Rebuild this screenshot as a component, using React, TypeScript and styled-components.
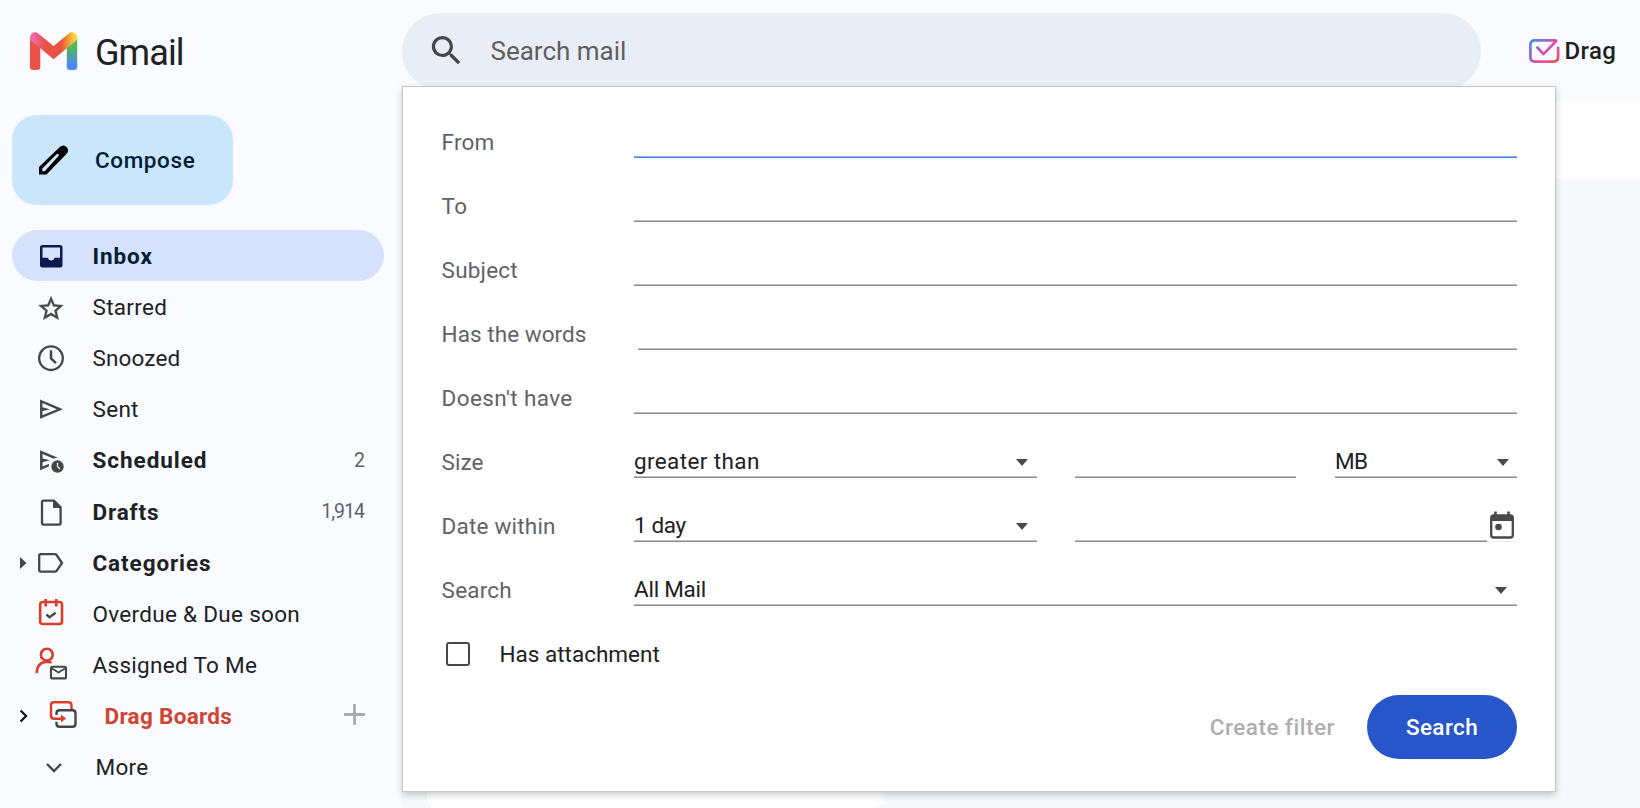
import React from "react";
import styled, { createGlobalStyle } from "styled-components";

const GlobalStyle = createGlobalStyle`
  * { box-sizing: border-box; }
  body {
    margin: 0;
    overflow: hidden;
    background: #f9fbff;
    font-family: Roboto, "Liberation Sans", sans-serif;
    font-size: 22.5px;
    color: #202124;
  }
`;

const Page = styled.div`
  position: relative;
  display: grid;
  grid-template-columns: 402px 1fr;
  width: 1640px;
  height: 808px;
  overflow: hidden;
`;

const Sidebar = styled.aside`
  display: flex;
  flex-direction: column;
  align-items: flex-start;
`;

const Brand = styled.div`
  display: flex;
  align-items: center;
  height: 102px;
  padding-left: 29px;
  gap: 16px;
`;

const BrandName = styled.span`
  padding-top: 3px;
  font-size: 36px;
  line-height: 40px;
  letter-spacing: -0.9px;
`;

const ComposeButton = styled.button`
  display: flex;
  align-items: center;
  width: 221px;
  height: 90px;
  margin: 13px 0 25px 12px;
  padding: 0 0 1px 25px;
  gap: 24px;
  border: 0;
  border-radius: 25px;
  background: #c9e6fd;
  color: #001d35;
  font: 500 22.5px Roboto, sans-serif;
  letter-spacing: 0.6px;
`;

const Nav = styled.nav`
  display: flex;
  flex-direction: column;
`;

const NavRow = styled.a<{ $active?: boolean }>`
  display: flex;
  align-items: center;
  width: 372px;
  height: 51.2px;
  margin-left: 12px;
  padding-right: 19px;
  border-radius: 26px;
  background: ${(p) => (p.$active ? "#d6e2fb" : "transparent")};
  color: ${(p) => (p.$active ? "#001d35" : "#202124")};
`;

const Expander = styled.span`
  display: flex;
  align-items: center;
  width: 19px;
  padding-left: 8px;
`;

const IconSlot = styled.span<{ $shift?: number }>`
  display: flex;
  width: 40px;
  height: 40px;
  margin-left: ${(p) => p.$shift ?? 0}px;
`;

const NavLabel = styled.span<{ $weight?: number; $spacing?: number; $color?: string }>`
  flex: 1;
  margin-left: 21.5px;
  font-weight: ${(p) => p.$weight ?? 400};
  letter-spacing: ${(p) => p.$spacing ?? 0.3}px;
  color: ${(p) => p.$color ?? "inherit"};
  white-space: nowrap;
`;

const Count = styled.span<{ $tight?: boolean }>`
  font-size: 19.5px;
  color: #5f6368;
  letter-spacing: ${(p) => (p.$tight ? "-1px" : "0")};
  margin-right: ${(p) => (p.$tight ? "1px" : "0")};
`;

const Main = styled.main`
  display: flex;
  flex-direction: column;
`;

const TopBar = styled.header`
  display: flex;
  align-items: flex-start;
  height: 102px;
  padding-top: 13px;
`;

const SearchBar = styled.div`
  display: flex;
  align-items: center;
  width: 1079px;
  height: 77px;
  padding: 0 0 2px 25px;
  gap: 24.5px;
  border-radius: 39px;
  background: #e9eef6;
  color: #5f5f5f;
  font-size: 26px;
`;

const DragBrand = styled.div`
  display: flex;
  align-items: center;
  height: 75px;
  margin-left: 47px;
  gap: 4.5px;
  font-size: 24px;
  font-weight: 500;
  letter-spacing: 0.4px;
  color: #1f1f1f;
`;

const Toolbar = styled.div`
  height: 77px;
  background: #fff;
`;

const Content = styled.section`
  display: flex;
  flex: 1;
  align-items: flex-end;
  padding-left: 25px;
  background: #f6f8fc;
`;

const Card = styled.div`
  width: 457px;
  height: 60px;
  margin-bottom: -1px;
  border-radius: 12px;
  background: #fff;
`;

const Panel = styled.form`
  position: absolute;
  top: 86px;
  left: 402px;
  display: flex;
  flex-direction: column;
  width: 1154px;
  height: 706px;
  padding: 23px 38px 0;
  border: 1px solid #c6c6c6;
  background: #fff;
  box-shadow: 0 3px 7px rgba(0, 0, 0, 0.2);
`;

const FieldRow = styled.div`
  display: grid;
  grid-template-columns: 193px 1fr;
  align-items: center;
  height: 64px;
`;

const FieldLabel = styled.label<{ $spacing?: number }>`
  padding-left: 0.6px;
  color: #5f6368;
  letter-spacing: ${(p) => p.$spacing ?? 0.2}px;
`;

const Controls = styled.div`
  display: flex;
  align-items: center;
`;

const Line = styled.div<{ $focus?: boolean; $width?: number; $ml?: number }>`
  flex: ${(p) => (p.$width ? "none" : "1")};
  width: ${(p) => (p.$width ? `${p.$width}px` : "auto")};
  height: 32px;
  margin-left: ${(p) => p.$ml ?? 0}px;
  border-bottom: 1px solid ${(p) => (p.$focus ? "#4c80e6" : "#8b8b8b")};
  box-shadow: inset 0 -1px ${(p) => (p.$focus ? "#8fb3f3" : "#c0c0c0")};
`;

const Select = styled(Line)<{ $arrow: number; $spacing?: number }>`
  display: flex;
  align-items: center;
  justify-content: space-between;
  padding: 0 ${(p) => p.$arrow}px 1px 0;
  letter-spacing: ${(p) => p.$spacing ?? 0.38}px;
`;

const Caret = styled.span`
  border: 6px solid transparent;
  border-top: 7px solid #4a4a4a;
  border-bottom: 0;
  margin-top: 3px;
`;

const CalendarSlot = styled.span`
  display: flex;
  justify-content: center;
  width: 30px;
  height: 32px;
  border-bottom: 1px solid #ececec;
`;

const CheckRow = styled.label`
  display: flex;
  align-items: center;
  height: 64px;
  padding-left: 5px;
  gap: 29.5px;
`;

const CheckBox = styled.span`
  width: 24px;
  height: 24px;
  border: 2.5px solid #484848;
  border-radius: 3px;
`;

const Actions = styled.div`
  display: flex;
  align-items: center;
  justify-content: flex-end;
  height: 64px;
  margin-top: 9px;
  gap: 32px;
`;

const TextButton = styled.span`
  font-weight: 500;
  color: #aeaeaf;
  letter-spacing: 0.5px;
`;

const PrimaryButton = styled.button`
  width: 150px;
  height: 64px;
  border: 0;
  border-radius: 32px;
  background: #2656c9;
  color: #fff;
  font: 500 22.5px Roboto, sans-serif;
  letter-spacing: 0.4px;
`;

const INK = "#444746";
const RED = "#dc3c28";

const GmailLogo = () => (
  <svg width="50" height="40" viewBox="0 0 50 40" fill="none">
    <defs>
      <linearGradient id="fold" gradientUnits="userSpaceOnUse" x1="1" y1="0" x2="48" y2="0">
        <stop offset="0.06" stopColor="#ed6ca8" />
        <stop offset="0.32" stopColor="#ea5247" />
        <stop offset="0.66" stopColor="#ea5242" />
        <stop offset="0.82" stopColor="#f49a38" />
        <stop offset="0.95" stopColor="#fcd83e" />
      </linearGradient>
      <linearGradient id="leg" x1="0" y1="0" x2="0" y2="1">
        <stop offset="0.35" stopColor="#52b362" />
        <stop offset="0.85" stopColor="#4f86fb" />
      </linearGradient>
    </defs>
    <path d="M1 7h10.3v29q0 3-3 3H4q-3 0-3-3z" fill="#ea5247" />
    <path d="M37.8 7h10.4v29q0 3-3 3h-4.4q-3 0-3-3z" fill="url(#leg)" />
    <path d="M6.1 6.4 24.6 21.6 43.1 6.4" stroke="url(#fold)" strokeWidth="10.2" strokeLinecap="round" />
  </svg>
);

const PencilIcon = () => (
  <svg width="34" height="34" viewBox="0 0 34 34">
    <path d="M2 31.500v-7.500L22.800 4q3.600-3 6.800 0 3 3.400-.2 7L9.500 31.500z" fill="#000" />
    <path d="M5.300 28.200v-2.800L19.600 11.200q1-.8 1.900 0t0 1.900L7.800 28.200z" fill="#c9e6fd" />
  </svg>
);

const SearchIcon = () => (
  <svg width="39" height="39" viewBox="0 0 24 24" fill={INK}>
    <path d="M15.5 14h-.79l-.28-.27A6.471 6.471 0 0 0 16 9.5 6.5 6.5 0 1 0 9.5 16c1.61 0 3.09-.59 4.23-1.57l.27.28v.79l5 4.99L20.49 19l-4.99-5zm-6 0C7.01 14 5 11.99 5 9.5S7.01 5 9.5 5 14 7.01 14 9.5 11.99 14 9.5 14z" />
  </svg>
);

const Glyph = ({ children }: { children: React.ReactNode }) => (
  <svg width="40" height="40" viewBox="0 0 40 40" fill="none">
    {children}
  </svg>
);

const InboxIcon = () => (
  <Glyph>
    <path
      fillRule="evenodd"
      fill="#0b1b4d"
      d="M11.500 9h17.500a2.500 2.500 0 0 1 2.500 2.500v17.500a2.500 2.500 0 0 1-2.500 2.500H11.500A2.500 2.500 0 0 1 9 29V11.500A2.500 2.500 0 0 1 11.500 9zm0 2.500v10.300h5.300a3.500 3.500 0 0 0 6.800 0h5.400V11.500z"
    />
  </Glyph>
);

const StarIcon = () => (
  <Glyph>
    <path
      fill={INK}
      stroke={INK}
      strokeWidth="0.3"
      transform="translate(5.2 6.8) scale(1.235)"
      d="M22 9.24l-7.19-.62L12 2 9.19 8.63 2 9.24l5.46 4.73L5.82 21 12 17.27 18.18 21l-1.63-7.03L22 9.24zM12 15.4l-3.76 2.27 1-4.28-3.32-2.88 4.38-.38L12 6.1l1.71 4.04 4.38.38-3.32 2.88 1 4.28L12 15.4z"
    />
  </Glyph>
);

const ClockIcon = () => (
  <Glyph>
    <circle cx="20" cy="20.2" r="11.8" stroke={INK} strokeWidth="2.3" />
    <path d="M20 12.200V20.500l5 4.700" stroke={INK} strokeWidth="2.5" />
  </Glyph>
);

const SendIcon = () => (
  <Glyph>
    <path
      fill={INK}
      transform="translate(5.400 34.700) scale(.0303)"
      d="M120-160v-640l760 320-760 320Zm80-120 474-200-474-200v140l240 60-240 60v140Z"
    />
  </Glyph>
);

const ScheduleIcon = () => (
  <Glyph>
    <path
      fill={INK}
      transform="translate(5.300 35.300) scale(.0312)"
      d="M120-160v-640l572 240h-12q-35 0-66 8t-60 22L200-680v140l240 60-240 60v140l216-92q-8 23-12 45.500t-4 45.500v2L120-160Zm560 80q-83 0-141.500-58.500T480-280q0-83 58.500-141.500T680-480q83 0 141.500 58.500T880-280q0 83-58.500 141.500T680-80Zm66-106 28-28-74-74v-112h-40v128l86 86Z"
    />
  </Glyph>
);

const DraftIcon = () => (
  <Glyph>
    <path d="M12.500 8.600H23l6.600 6.600V31q0 1.600-1.600 1.600H12.500q-1.500 0-1.500-1.600V10.200q0-1.600 1.500-1.600z" stroke={INK} strokeWidth="2.300" />
    <path d="M22 8v8h8z" fill={INK} />
  </Glyph>
);

const LabelIcon = () => (
  <Glyph>
    <path d="M9.800 11.200H24q1 0 1.600.800L31 20l-5.400 7.800q-.6.900-1.600.9H9.800q-1.600 0-1.600-1.600V12.800q0-1.600 1.600-1.600z" stroke={INK} strokeWidth="2.300" />
  </Glyph>
);

const DueIcon = () => (
  <Glyph>
    <rect x="9.200" y="8" width="21.800" height="22" rx="2.500" stroke={RED} strokeWidth="2.600" />
    <path d="M14.700 5v7.500M25.300 5v7.500" stroke={RED} strokeWidth="2.600" />
    <path d="m15.500 20.500 3 2.800 6.200-4.600" stroke={INK} strokeWidth="2.400" />
  </Glyph>
);

const AssignedIcon = () => (
  <Glyph>
    <circle cx="15.800" cy="9.700" r="5.900" stroke={RED} strokeWidth="2.600" />
    <path d="M5.700 28Q6 17.500 15.500 16.700q2.500 0 5 .9" stroke={RED} strokeWidth="2.600" />
    <rect x="20" y="21.800" width="15" height="11.600" rx="1.500" stroke={INK} strokeWidth="2.100" />
    <path d="m21 23.500 6.500 4 6.500-4" stroke={INK} strokeWidth="1.900" />
  </Glyph>
);

const BoardsIcon = () => (
  <Glyph>
    <path d="M28.500 13V9.200q0-3-3-3H11q-3 0-3 3v10.500q0 3 3 3h9" stroke={RED} strokeWidth="2.400" />
    <path d="m18 18.500 5 4-5 4z" fill={RED} />
    <path d="M13.500 19v-1.800q0-3 3-3h13q3 0 3 3v10.500q0 3-3 3h-13q-3 0-3-3v-2" stroke={INK} strokeWidth="2.400" />
  </Glyph>
);

const MoreIcon = () => (
  <Glyph>
    <path d="m13 17 7 7 7-7" stroke={INK} strokeWidth="2.400" />
  </Glyph>
);

const CalendarIcon = () => (
  <svg width="26" height="30" viewBox="0 0 26 30" fill="none">
    <path d="M6.500 1.500v4M19.500 1.500v4" stroke="#484848" strokeWidth="2.600" />
    <rect x="2.200" y="5.500" width="21.600" height="22" rx="2.500" stroke="#484848" strokeWidth="2.300" />
    <path d="M2 5h22v6H2z" fill="#484848" />
    <circle cx="9.500" cy="17" r="3.300" fill="#484848" />
  </svg>
);

const DragLogo = () => (
  <svg width="32" height="26" viewBox="0 0 32 26" fill="none">
    <defs>
      <linearGradient id="drag" gradientUnits="userSpaceOnUse" x1="2" y1="3" x2="27" y2="26">
        <stop offset="0" stopColor="#3f8cf5" />
        <stop offset="0.5" stopColor="#d050b4" />
        <stop offset="0.75" stopColor="#e8559a" />
        <stop offset="1" stopColor="#ea5252" />
      </linearGradient>
    </defs>
    <path
      d="m9.400 9.500 6 6.600L28 3.300Q28.400 2.400 27 2.400H7q-4.600 0-4.600 4.600v12q0 4.600 4.600 4.600h18.500q4.600 0 4.600-4.600V9.800"
      stroke="url(#drag)"
      strokeWidth="2.700"
      strokeLinecap="round"
      strokeLinejoin="round"
    />
  </svg>
);

const TriangleIcon = () => (
  <svg width="7" height="14" viewBox="0 0 7 14">
    <path d="M0 1l6.500 6L0 13z" fill={INK} />
  </svg>
);

const ChevronIcon = () => (
  <svg width="9" height="14" viewBox="0 0 9 14" fill="none">
    <path d="m0.600 1.500 5.500 5.500L.6 12.500" stroke="#111" strokeWidth="2.200" />
  </svg>
);

const PlusIcon = () => (
  <svg width="21" height="21" viewBox="0 0 21 21" fill="none">
    <path d="M10.500 0v21M0 10.500h21" stroke="#aaa" strokeWidth="2.800" />
  </svg>
);

const PlusSlot = styled.span`
  display: flex;
  padding-bottom: 3px;
`;

export default function App() {
  return (
    <Page>
      <GlobalStyle />
      <Sidebar>
        <Brand>
          <GmailLogo />
          <BrandName>Gmail</BrandName>
        </Brand>
        <ComposeButton>
          <PencilIcon />
          <span>Compose</span>
        </ComposeButton>
        <Nav>
          <NavRow $active>
            <Expander />
            <IconSlot><InboxIcon /></IconSlot>
            <NavLabel $weight={700} $spacing={0.9}>Inbox</NavLabel>
          </NavRow>
          <NavRow>
            <Expander />
            <IconSlot><StarIcon /></IconSlot>
            <NavLabel>Starred</NavLabel>
          </NavRow>
          <NavRow>
            <Expander />
            <IconSlot><ClockIcon /></IconSlot>
            <NavLabel $spacing={0.15}>Snoozed</NavLabel>
          </NavRow>
          <NavRow>
            <Expander />
            <IconSlot><SendIcon /></IconSlot>
            <NavLabel>Sent</NavLabel>
          </NavRow>
          <NavRow>
            <Expander />
            <IconSlot><ScheduleIcon /></IconSlot>
            <NavLabel $weight={700} $spacing={0.95}>Scheduled</NavLabel>
            <Count>2</Count>
          </NavRow>
          <NavRow>
            <Expander />
            <IconSlot><DraftIcon /></IconSlot>
            <NavLabel $weight={700} $spacing={0.85}>Drafts</NavLabel>
            <Count $tight>1,914</Count>
          </NavRow>
          <NavRow>
            <Expander><TriangleIcon /></Expander>
            <IconSlot><LabelIcon /></IconSlot>
            <NavLabel $weight={700} $spacing={0.9}>Categories</NavLabel>
          </NavRow>
          <NavRow>
            <Expander />
            <IconSlot><DueIcon /></IconSlot>
            <NavLabel>Overdue &amp; Due soon</NavLabel>
          </NavRow>
          <NavRow>
            <Expander />
            <IconSlot><AssignedIcon /></IconSlot>
            <NavLabel>Assigned To Me</NavLabel>
          </NavRow>
          <NavRow>
            <Expander><ChevronIcon /></Expander>
            <IconSlot $shift={12}><BoardsIcon /></IconSlot>
            <NavLabel $weight={700} $color="#cf4434">Drag Boards</NavLabel>
            <PlusSlot><PlusIcon /></PlusSlot>
          </NavRow>
          <NavRow>
            <Expander />
            <IconSlot $shift={3}><MoreIcon /></IconSlot>
            <NavLabel>More</NavLabel>
          </NavRow>
        </Nav>
      </Sidebar>

      <Main>
        <TopBar>
          <SearchBar>
            <SearchIcon />
            <span>Search mail</span>
          </SearchBar>
          <DragBrand>
            <DragLogo />
            <span>Drag</span>
          </DragBrand>
        </TopBar>
        <Toolbar />
        <Content>
          <Card />
        </Content>
      </Main>

      <Panel>
        <FieldRow>
          <FieldLabel>From</FieldLabel>
          <Controls><Line $focus /></Controls>
        </FieldRow>
        <FieldRow>
          <FieldLabel>To</FieldLabel>
          <Controls><Line /></Controls>
        </FieldRow>
        <FieldRow>
          <FieldLabel>Subject</FieldLabel>
          <Controls><Line /></Controls>
        </FieldRow>
        <FieldRow>
          <FieldLabel $spacing={0.05}>Has the words</FieldLabel>
          <Controls><Line $ml={4} /></Controls>
        </FieldRow>
        <FieldRow>
          <FieldLabel $spacing={0.38}>Doesn't have</FieldLabel>
          <Controls><Line /></Controls>
        </FieldRow>
        <FieldRow>
          <FieldLabel $spacing={0}>Size</FieldLabel>
          <Controls>
            <Select $width={403} $arrow={9}>greater than<Caret /></Select>
            <Line $width={221} $ml={38} />
            <Select $ml={39} $arrow={8} $spacing={-0.6}>MB<Caret /></Select>
          </Controls>
        </FieldRow>
        <FieldRow>
          <FieldLabel>Date within</FieldLabel>
          <Controls>
            <Select $width={403} $arrow={9} $spacing={-0.4}>1 day<Caret /></Select>
            <Line $width={412} $ml={38} />
            <CalendarSlot><CalendarIcon /></CalendarSlot>
          </Controls>
        </FieldRow>
        <FieldRow>
          <FieldLabel>Search</FieldLabel>
          <Controls>
            <Select $arrow={10} $spacing={-0.25}>All Mail<Caret /></Select>
          </Controls>
        </FieldRow>
        <CheckRow>
          <CheckBox />
          <span>Has attachment</span>
        </CheckRow>
        <Actions>
          <TextButton>Create filter</TextButton>
          <PrimaryButton type="button">Search</PrimaryButton>
        </Actions>
      </Panel>
    </Page>
  );
}
